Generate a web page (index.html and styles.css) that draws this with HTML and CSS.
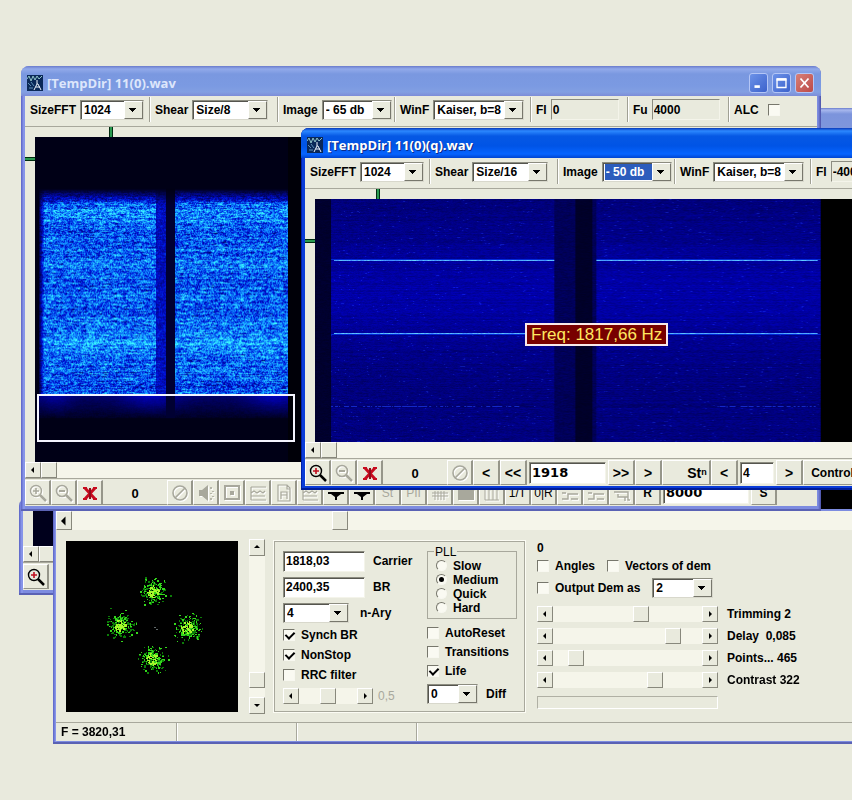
FILE: index.html
```html
<!DOCTYPE html>
<html lang="en">
<head>
<meta charset="utf-8">
<title>Signal analyzer</title>
<link rel="stylesheet" href="styles.css">
</head>
<body>
<svg class="defs" aria-hidden="true">
  <symbol id="app" viewBox="0 0 16 16"><rect width="16" height="16" fill="#0a2858"/><path d="M0 4l2-3 2 5 2-5 2 4 2-4 2 3 3-3" fill="none" stroke="#8fc4c8"/><path d="M1 8l3 3M4 7l3 4M2 13h4" stroke="#5e90b8" fill="none"/><path d="M10 5v4M7 15l3-6h1l3 6M9 12h4" stroke="#f0f6ff" fill="none"/></symbol>
  <symbol id="zoomin" viewBox="0 0 20 20"><path d="M12 12l6 6" stroke="currentColor" stroke-width="2.5"/><circle cx="8" cy="8" r="5.5" fill="none" stroke="currentColor" stroke-width="1.4"/><path class="plus" d="M5 8h6M8 5v6" stroke-width="1.6"/></symbol>
  <symbol id="zoomout" viewBox="0 0 20 20"><path d="M12 12l6 6" stroke="currentColor" stroke-width="2.5"/><circle cx="8" cy="8" r="5.5" fill="none" stroke="currentColor" stroke-width="1.6"/><path d="M5 8h6" stroke="currentColor" stroke-width="2"/></symbol>
  <symbol id="erase" viewBox="0 0 20 20"><path d="M5 5l10 11M15 5L5 16" stroke="#c80c20" stroke-width="3"/><path d="M3 5h4M13 5h4M3 16h4M13 16h4" stroke="#c80c20" stroke-width="2"/><path d="M10 5v11" stroke="#900c1c" stroke-width="2"/></symbol>
  <symbol id="none" viewBox="0 0 20 20"><circle cx="10" cy="10" r="7" fill="none" stroke="currentColor" stroke-width="1.6"/><path d="M5 15L15 5" stroke="currentColor" stroke-width="1.6"/></symbol>
  <symbol id="speaker" viewBox="0 0 20 20"><path d="M3 7h3l6-5v16l-6-5H3z" fill="currentColor"/><path d="M15 4v2M17 8v1M15 10v1M17 13v1M15 15v2" stroke="currentColor" stroke-width="1.6"/></symbol>
  <symbol id="target" viewBox="0 0 20 20"><rect x="3" y="3" width="14" height="13" fill="none" stroke="currentColor" stroke-width="2"/><rect x="8" y="8" width="4" height="4" fill="currentColor"/></symbol>
  <symbol id="wave" viewBox="0 0 20 20"><path d="M3 4h15M3 10l3-2 3 2 3-2 3 2 2-2M3 13h14M3 17h15M3 4v13" fill="none" stroke="currentColor" stroke-width="1.2"/></symbol>
  <symbol id="report" viewBox="0 0 20 20"><path d="M4 2h9l3 3v13H4zM13 2v4h3M7 16V9h6v7M7 12h6" fill="none" stroke="currentColor" stroke-width="1.2"/></symbol>
  <symbol id="drop" viewBox="0 0 20 20"><path d="M2 9h16v2h-3l-4 3v3H9v-3l-4-3H2z" fill="currentColor"/></symbol>
  <symbol id="gridi" viewBox="0 0 20 20"><path d="M2 10h16M2 13h16M5 8v9M8 8v9M11 8v9M14 8v9" stroke="currentColor"/></symbol>
  <symbol id="block" viewBox="0 0 20 20"><path d="M2 7h16v10H2z" fill="currentColor"/></symbol>
  <symbol id="bars" viewBox="0 0 20 20"><path d="M3 17V5M7 17V7M11 17V5M15 17V7M3 17h14" stroke="currentColor" fill="none"/></symbol>
  <symbol id="step" viewBox="0 0 20 20"><path d="M2 16h6v-5h10M2 10h4M11 16h7" stroke="currentColor" fill="none" stroke-width="1.4"/></symbol>
  <symbol id="link" viewBox="0 0 20 20"><path d="M2 9h14v5H6v-3M13 14v4M16 13v4h2" stroke="currentColor" fill="none" stroke-width="1.4"/></symbol>
  <symbol id="left" viewBox="0 0 8 8"><path d="M2 4l3-3v6z" fill="currentColor"/></symbol>
  <symbol id="right" viewBox="0 0 8 8"><path d="M6 4L3 1v6z" fill="currentColor"/></symbol>
  <symbol id="up" viewBox="0 0 8 8"><path d="M4 2L1 5h6z" fill="currentColor"/></symbol>
  <symbol id="down" viewBox="0 0 8 8"><path d="M4 6L1 3h6z" fill="currentColor"/></symbol>
</svg>

<main class="desktop">

  <section class="window win-back" aria-label="Background analyzer">
    <div class="view"><div class="black"></div></div>
    <div class="scroll"><button aria-label="Scroll left"><svg><use href="#left"/></svg></button><input type="range" value="0" aria-label="Position"></div>
    <div class="tools"><button class="tool" aria-label="Zoom in"><svg><use href="#zoomin"/></svg></button></div>
  </section>

  <section class="window win-demod" aria-label="Demodulator">
    <header class="title"></header>
    <div class="black fill"></div>
    <div class="scroll tall"><button aria-label="Scroll left"><svg><use href="#left"/></svg></button><input type="range" value="27" aria-label="Position"></div>
    <div class="panel">
      <canvas id="constellation" width="172" height="171"></canvas>
      <div class="scroll vertical"><button aria-label="Up"><svg><use href="#up"/></svg></button><input type="range" value="7" aria-label="Scale"><button aria-label="Down"><svg><use href="#down"/></svg></button></div>
      <div class="group">
        <div class="stack">
          <label class="row"><input class="field w-num" value="1818,03">Carrier</label>
          <label class="row"><input class="field w-num" value="2400,35">BR</label>
          <label class="row wide-gap"><span class="combo w-ary"><select><option>4</option></select></span>n-Ary</label>
          <div>
            <label class="check"><input type="checkbox" checked>Synch BR</label>
            <label class="check"><input type="checkbox" checked>NonStop</label>
            <label class="check"><input type="checkbox">RRC filter</label>
          </div>
          <div class="row dim"><div class="scroll bar"><button aria-label="Less"><svg><use href="#left"/></svg></button><input type="range" value="50" aria-label="Roll-off"><button aria-label="More"><svg><use href="#right"/></svg></button></div>0,5</div>
        </div>
        <div class="side">
          <fieldset>
            <legend>PLL</legend>
            <label class="radio"><input type="radio" name="pll">Slow</label>
            <label class="radio"><input type="radio" name="pll" checked>Medium</label>
            <label class="radio"><input type="radio" name="pll">Quick</label>
            <label class="radio"><input type="radio" name="pll">Hard</label>
          </fieldset>
          <div class="checks">
            <label class="check"><input type="checkbox">AutoReset</label>
            <label class="check"><input type="checkbox">Transitions</label>
            <label class="check"><input type="checkbox" checked>Life</label>
          </div>
          <label class="row"><span class="combo w-diff"><select><option>0</option></select></span>Diff</label>
        </div>
      </div>
      <div class="output">
        <div>0</div>
        <div class="line"><label class="check"><input type="checkbox">Angles</label><label class="check"><input type="checkbox">Vectors of dem</label></div>
        <div class="line"><label class="check"><input type="checkbox">Output Dem as</label><span class="combo w-dem"><select aria-label="Output format"><option>2</option></select></span></div>
        <div class="sliders">
          <div class="scroll"><button aria-label="Less"><svg><use href="#left"/></svg></button><input id="trim" type="range" value="60"><button aria-label="More"><svg><use href="#right"/></svg></button></div><label for="trim">Trimming 2</label>
          <div class="scroll"><button aria-label="Less"><svg><use href="#left"/></svg></button><input id="delay" type="range" value="84"><button aria-label="More"><svg><use href="#right"/></svg></button></div><label for="delay">Delay&nbsp; 0,085</label>
          <div class="scroll"><button aria-label="Less"><svg><use href="#left"/></svg></button><input id="points" type="range" value="11"><button aria-label="More"><svg><use href="#right"/></svg></button></div><label for="points">Points... 465</label>
          <div class="scroll"><button aria-label="Less"><svg><use href="#left"/></svg></button><input id="contrast" type="range" value="71"><button aria-label="More"><svg><use href="#right"/></svg></button></div><label for="contrast">Contrast 322</label>
          <div class="progress"></div>
        </div>
      </div>
    </div>
    <footer class="status"><span>F = 3820,31</span><span></span><span></span><span></span></footer>
  </section>

  <section class="window win-source" aria-label="11(0).wav">
    <header class="title"><svg><use href="#app"/></svg><h2>[TempDir] 11(0).wav</h2>
      <button class="cap" aria-label="Minimize"><svg viewBox="0 0 19 20"><path d="M5 14h6" stroke="#fff" stroke-width="3"/></svg></button>
      <button class="cap" aria-label="Maximize"><svg viewBox="0 0 19 20"><path d="M4 6h11M4.500 5v10h10V5" stroke="#fff" stroke-width="1.500" fill="none"/><path d="M4 6h11" stroke="#fff" stroke-width="3"/></svg></button>
      <button class="cap close" aria-label="Close"><svg viewBox="0 0 19 20"><path d="M5 5l9 10M14 5L5 15" stroke="#fff" stroke-width="2"/></svg></button>
    </header>
    <div class="options">
      <label>SizeFFT<span class="combo w-fft"><select><option>1024</option></select></span></label>
      <label>Shear<span class="combo w-shear"><select><option>Size/8</option></select></span></label>
      <label>Image<span class="combo w-image"><select><option>- 65 db</option></select></span></label>
      <label>WinF<span class="combo w-winf"><select><option>Kaiser, b=8</option></select></span></label>
      <label>Fl<input class="field flat" value="0"></label>
      <label>Fu<input class="field flat" value="4000"></label>
      <label>ALC<input type="checkbox"></label>
    </div>
    <div class="view">
      <i class="tick-x"></i><i class="tick-y"></i>
      <canvas id="spectrum-source" width="782" height="326"></canvas>
      <div class="selection"></div>
    </div>
    <div class="scroll"><button aria-label="Scroll left"><svg><use href="#left"/></svg></button><input type="range" value="0" aria-label="Position"></div>
    <div class="tools">
      <button class="tool" disabled aria-label="Zoom in"><svg><use href="#zoomin"/></svg></button>
      <button class="tool" disabled aria-label="Zoom out"><svg><use href="#zoomout"/></svg></button>
      <button class="tool" aria-label="Clear"><svg><use href="#erase"/></svg></button>
      <output>0</output>
      <button class="tool" disabled aria-label="Stop"><svg><use href="#none"/></svg></button>
      <button class="tool" disabled aria-label="Play"><svg><use href="#speaker"/></svg></button>
      <button class="tool" disabled aria-label="Frame"><svg><use href="#target"/></svg></button>
      <button class="tool" disabled aria-label="Waveform"><svg><use href="#wave"/></svg></button>
      <button class="tool" disabled aria-label="Report"><svg><use href="#report"/></svg></button>
      <button class="tool" disabled aria-label="Levels"><svg><use href="#wave"/></svg></button>
      <button class="tool" aria-label="Marker one"><svg><use href="#drop"/></svg></button>
      <button class="tool" aria-label="Marker two"><svg><use href="#drop"/></svg></button>
      <button class="tool thin" disabled>St</button>
      <button class="tool thin" disabled>PII</button>
      <button class="tool" disabled aria-label="Grid"><svg><use href="#gridi"/></svg></button>
      <button class="tool" disabled aria-label="Fill"><svg><use href="#block"/></svg></button>
      <button class="tool" disabled aria-label="Bars"><svg><use href="#bars"/></svg></button>
      <button class="tool thin">1/T</button>
      <button class="tool thin">0|R</button>
      <button class="tool" disabled aria-label="Steps"><svg><use href="#step"/></svg></button>
      <button class="tool" disabled aria-label="Edge"><svg><use href="#step"/></svg></button>
      <button class="tool" disabled aria-label="Link"><svg><use href="#link"/></svg></button>
      <button class="tool">R</button>
      <input class="field big w-rate" value="8000" aria-label="Sample rate">
      <button class="tool">S</button>
    </div>
  </section>

  <section class="window active win-result" aria-label="11(0)(q).wav">
    <header class="title"><svg><use href="#app"/></svg><h2>[TempDir] 11(0)(q).wav</h2></header>
    <div class="options">
      <label>SizeFFT<span class="combo w-fft"><select><option>1024</option></select></span></label>
      <label>Shear<span class="combo w-shear"><select><option>Size/16</option></select></span></label>
      <label>Image<span class="combo w-image chosen"><select><option>- 50 db</option></select></span></label>
      <label>WinF<span class="combo w-winf"><select><option>Kaiser, b=8</option></select></span></label>
      <label>Fl<input class="field flat" value="-4000"></label>
    </div>
    <div class="view">
      <i class="tick-x"></i><i class="tick-y"></i>
      <canvas id="spectrum-result" width="782" height="243"></canvas>
      <div class="hint">Freq: 1817,66 Hz</div>
    </div>
    <div class="scroll"><button aria-label="Scroll left"><svg><use href="#left"/></svg></button><input type="range" value="0" aria-label="Position"></div>
    <div class="tools">
      <button class="tool" aria-label="Zoom in"><svg><use href="#zoomin"/></svg></button>
      <button class="tool" disabled aria-label="Zoom out"><svg><use href="#zoomout"/></svg></button>
      <button class="tool" aria-label="Clear"><svg><use href="#erase"/></svg></button>
      <output>0</output>
      <button class="tool" disabled aria-label="Stop"><svg><use href="#none"/></svg></button>
      <button class="tool arrow">&lt;</button>
      <button class="tool arrow">&lt;&lt;</button>
      <input class="field big w-freq" value="1918" aria-label="Frequency">
      <button class="tool arrow">&gt;&gt;</button>
      <button class="tool arrow">&gt;</button>
      <button class="tool step">St<sup>n</sup></button>
      <button class="tool arrow">&lt;</button>
      <input class="field w-step" value="4" aria-label="Step">
      <button class="tool arrow">&gt;</button>
      <button class="tool control">Control</button>
    </div>
  </section>
</main>
<script src="script.js"></script>
</body>
</html>
```
FILE: styles.css
```css
* { box-sizing: border-box; }

:root {
  --face: #e9eadd;
  --light: #fcfcf4;
  --shade: #8c8c80;
  --track: #f5f5ea;
}

body {
  margin: 0;
  background: var(--face);
  color: #000;
  font: bold 12px/14px "Liberation Sans", Arial, sans-serif;
}

button, input, select, output { font: inherit; color: inherit; }
button { padding: 0; border: 0; background: var(--face); }
.defs { position: absolute; width: 0; height: 0; }

.desktop {
  position: relative;
  min-height: 100vh;
  overflow: hidden;
}

/* Windows */
.window {
  position: absolute;
  display: flex;
  flex-direction: column;
  padding: 0 4px 5px;
  border-radius: 8px 8px 0 0;
  background: linear-gradient(90deg, #5a63c4, #8f9df0 3px, #7d8ce0 4px, #7d8ce0 calc(100% - 3px), #4a50a8);
  box-shadow: inset 0 -2px #5a62b4;
}
.window > * { background-color: var(--face); }

.win-back { left: 19px; top: 498px; width: 600px; height: 97px; }
.win-demod { left: 53px; top: 108px; width: 1000px; height: 636px; padding: 0 3px 3px; }
.win-source { left: 21px; top: 66px; width: 800px; height: 445px; }
.win-result {
  left: 301px; top: 128px; width: 801px; height: 362px;
  padding-bottom: 4px;
  background: #0a3cd8;
  box-shadow: inset 0 -2px #001c98, inset 1px 0 #0020a8;
}

.title {
  display: flex;
  align-items: center;
  gap: 4px;
  flex: none;
  height: 30px;
  margin: 0 -4px;
  padding: 4px 7px 0 6px;
  border-radius: 8px 8px 0 0;
  background: linear-gradient(#6a7ccc, #92aaea 3px, #7a98e0 8px, #7b9ae2 20px, #829fe2 26px, #7c8cd8);
}
.active .title { background: linear-gradient(#0838b8, #2c88ff 3px, #0658e4 8px, #0054e6 18px, #0664ff 26px, #0044d0); }
.win-demod .title { background: linear-gradient(#6a7ccc, #a8b8ee 2px, #7c94dc 6px, #7f97dc); }
.title > svg { width: 16px; height: 16px; }
.title h2 {
  flex: 1;
  margin: 0;
  color: #dde6fb;
  font: bold 13px/16px "Open Sans", sans-serif;
}
.active .title h2 { color: #fff; text-shadow: 1px 1px #0a2c8c; }

.cap {
  width: 19px;
  height: 20px;
  border: 1px solid #b4c6f6;
  border-radius: 3px;
  background: linear-gradient(135deg, #6c92e8, #3c62cc);
}
.cap.close { background: linear-gradient(135deg, #d88078, #bc4a48); }
.cap svg { display: block; width: 100%; height: 100%; }

/* Option bar */
.options {
  display: grid;
  grid-template-columns: 124px 128px 117px 136px 97px 101px 1fr;
  flex: none;
  height: 31px;
  padding: 1px 0 4px;
  border-bottom: 1px solid #a8a89c;
}
.options label {
  display: flex;
  align-items: center;
  gap: 4px;
  min-width: 0;
  padding-left: 5px;
  border-left: 1px solid #a0a094;
  box-shadow: inset 1px 0 #fff;
}
.options label:first-child { border: 0; box-shadow: none; }
.options label:last-child input[type="checkbox"] { margin-left: 5px; }

.combo {
  display: flex;
  align-items: center;
  height: 20px;
  border: 1px solid var(--shade);
  border-right-color: #d8d8cc;
  border-bottom-color: #d8d8cc;
  box-shadow: inset 1px 1px #55554e;
  background: #fff;
}
.combo select {
  flex: 1;
  min-width: 0;
  height: 16px;
  margin-left: 1px;
  margin-right: -16px;
  padding: 0 0 0 2px;
  border: 0;
  background: none;
  appearance: none;
}
.combo::after {
  content: "";
  width: 17px;
  height: 16px;
  pointer-events: none;
  border: 1px solid #fff;
  border-right-color: #77776c;
  border-bottom-color: #77776c;
  background:
    linear-gradient(#000, #000) 4px 6px / 7px 1px no-repeat,
    linear-gradient(#000, #000) 5px 7px / 5px 1px no-repeat,
    linear-gradient(#000, #000) 6px 8px / 3px 1px no-repeat,
    linear-gradient(#000, #000) 7px 9px / 1px 1px no-repeat,
    var(--face);
}
.chosen select {
  background: linear-gradient(#2c5cbc, #2c5cbc) 1px 0 / 48px 100% no-repeat;
  color: #fff;
}
.w-fft { width: 64px; }
.w-shear { width: 76px; }
.w-image { width: 70px; }
.w-winf { width: 91px; }
.w-ary { width: 66px; }
.w-diff { width: 51px; }
.w-dem { width: 61px; }

.field {
  height: 21px;
  padding: 0 2px;
  border: 1px solid var(--shade);
  border-right-color: #f4f4ea;
  border-bottom-color: #f4f4ea;
  box-shadow: inset 1px 1px #55554e;
  background: #fff;
}
.field.flat { width: 68px; background: var(--face); box-shadow: none; padding: 0 1px; }
.field.big { font-family: "DejaVu Sans", sans-serif; font-size: 13px; }
.w-num { width: 82px; }
.w-rate { width: 86px; margin: 0 2px; }
.w-freq { width: 77px; margin: 0 2px; }
.w-step { width: 34px; margin: 0 2px; }

/* Spectrum view */
.view {
  position: relative;
  flex: 1;
  min-height: 0;
  padding: 10px 0 0 10px;
  overflow: hidden;
}
.view canvas { display: block; width: 100%; height: 100%; }
.black { height: 100%; background: #00001c; }
.window > .fill { flex: 1; height: auto; background: #000; }

.tick-x, .tick-y { position: absolute; background: #2a9a50; border: 0 solid #002c10; }
.tick-x { top: 0; width: 4px; height: 10px; border-width: 0 1px; }
.tick-y { left: 0; width: 10px; height: 4px; border-width: 1px 0; }
.win-source .tick-x { left: 84px; }
.win-source .tick-y { top: 30px; }
.win-result .tick-x { left: 71px; }
.win-result .tick-y { top: 50px; }

.selection {
  position: absolute;
  left: 12px;
  top: 267px;
  width: 258px;
  height: 48px;
  border: 2px solid #f4f4ff;
}
.hint {
  position: absolute;
  left: 220px;
  top: 134px;
  padding: 0 4px;
  border: 2px solid #f8e8e8;
  background: #780000;
  color: #ffe860;
  font-size: 17px;
  font-weight: normal;
  line-height: 19px;
  white-space: nowrap;
}

/* Scroll bars */
.scroll { display: flex; flex: none; height: 16px; background: var(--track); }
.scroll button {
  display: grid;
  place-items: center;
  flex: none;
  width: 16px;
  border: 1px solid #fff;
  border-right-color: #88887c;
  border-bottom-color: #88887c;
}
.scroll svg { width: 8px; height: 8px; }
.scroll input { flex: 1; min-width: 0; margin: 0; appearance: none; background: none; }
.scroll input::-webkit-slider-thumb {
  appearance: none;
  width: 16px;
  height: 16px;
  border: 1px solid #fff;
  border-right-color: #88887c;
  border-bottom-color: #88887c;
  background: var(--face);
}
.scroll.tall { height: 19px; margin-top: 2px; }
.scroll.tall input::-webkit-slider-thumb { height: 19px; }
.scroll.tall svg { width: 12px; height: 12px; }
.scroll.vertical { flex-direction: column; width: 16px; height: 175px; }
.scroll.vertical button { height: 17px; }
.scroll.vertical input { writing-mode: vertical-lr; direction: rtl; width: 16px; }

/* Bottom tool bar */
.tools {
  display: flex;
  flex: none;
  align-items: stretch;
  height: 28px;
  padding: 1px 0;
  border-top: 1px solid #a8a89c;
}
.tool {
  --plus: #c01020;
  display: flex;
  align-items: center;
  justify-content: center;
  flex: none;
  width: 26px;
  border: 1px solid #fff;
  border-right: 2px solid #96968a;
  border-bottom-color: #96968a;
}
.tool svg { width: 20px; height: 20px; }
.plus { stroke: var(--plus); }
.tool:disabled { --plus: #a8a89c; color: #a8a89c; }
.tool:disabled svg { filter: drop-shadow(1px 1px #fff); }
.tools output {
  width: 64px;
  border-bottom: 1px solid #96968a;
  font-size: 13px;
  line-height: 27px;
  text-align: center;
}
.tools .field { height: 22px; align-self: center; }
.thin { font-weight: normal; }
.arrow { width: 27px; font-size: 14px; }
.step { width: 49px; padding-left: 22px; font-size: 14px; }
.step sup { font-size: 9px; line-height: 9px; }
.control { width: 60px; }

/* Demodulator */
.panel {
  display: flex;
  align-items: center;
  flex: none;
  height: 192px;
  padding-left: 10px;
}
.panel > .vertical { margin: 0 9px 0 11px; }
.group {
  display: flex;
  flex: none;
  justify-content: space-between;
  width: 251px;
  height: 171px;
  padding: 0 7px 0 8px;
  border: 1px solid #a8a89c;
  outline: 1px solid #fcfcf4;
}
.stack { display: flex; flex-direction: column; gap: 5px; padding-top: 9px; }
.stack > div:nth-child(4) { margin-top: -4px; }
.stack > div:last-child { margin-top: -2px; }
.row { display: flex; align-items: center; gap: 8px; height: 21px; }
.wide-gap { gap: 11px; }
.row.dim { height: 16px; gap: 5px; color: #a8a89c; font-weight: normal; }
.row.dim svg { color: #000; }
.bar { width: 90px; }

.check { display: flex; align-items: center; gap: 6px; height: 20px; }
.side .check { height: 19px; }
input[type="checkbox"], input[type="radio"] {
  appearance: none;
  flex: none;
  width: 12px;
  height: 12px;
  margin: 0;
  border: 1px solid #77776c;
  border-right-color: #f8f8f0;
  border-bottom-color: #f8f8f0;
  background: #fafaf2;
}
input[type="checkbox"]:checked::after {
  content: "";
  display: block;
  width: 4px;
  height: 7px;
  margin: 0 0 0 3px;
  border: solid #000;
  border-width: 0 2px 2px 0;
  transform: rotate(45deg);
}
input[type="radio"] { width: 11px; height: 11px; border-radius: 50%; }
input[type="radio"]:checked::after {
  content: "";
  display: block;
  width: 5px;
  height: 5px;
  margin: 2px;
  border-radius: 50%;
  background: #000;
}

.side { width: 90px; padding-top: 3px; }
fieldset {
  height: 74px;
  margin: 0;
  padding: 0 0 0 8px;
  border: 1px solid #a8a89c;
}
legend { padding: 0 1px; margin-left: -2px; font-weight: normal; }
.radio { display: flex; align-items: center; gap: 6px; height: 14px; }
.checks { margin: 5px 0 3px; }

.output { flex: 1; align-self: flex-start; padding: 11px 0 0 12px; }
.line { display: flex; align-items: center; gap: 12px; height: 22px; }
.sliders {
  display: grid;
  grid-template-columns: 181px 1fr;
  grid-auto-rows: 16px;
  align-items: center;
  gap: 6px 9px;
  margin-top: 7px;
}
.progress { height: 13px; border: 1px solid #b0b0a4; border-right-color: #fff; border-bottom-color: #fff; }

.status {
  display: grid;
  grid-template-columns: 121px 118px 118px 1fr;
  gap: 2px;
  flex: none;
  height: 19px;
  border-top: 1px solid #a8a89c;
}
.status span { padding: 2px 5px; border-right: 1px solid #a8a89c; box-shadow: 1px 0 #fff; }
```
FILE: script.js
```js
// Seeded generator, so that every load draws the same signal.
function generator(seed) {
  return function () {
    seed = (seed * 1664525 + 1013904223) >>> 0;
    return seed / 4294967296;
  };
}

function ramp(v) {
  v = Math.max(0, Math.min(1, v));
  if (v < 0.4) return [0, v * 30, 30 + v * 450];
  const t = (v - 0.4) / 0.6;
  return [t * t * 60, 12 + t * 235, 210 + Math.min(1, t * 2) * 45];
}

function paint(id, seed, level) {
  const canvas = document.getElementById(id);
  const ctx = canvas.getContext("2d");
  const image = ctx.createImageData(canvas.width, canvas.height);
  const random = generator(seed);
  for (let y = 0; y < canvas.height; y++) {
    const row = random();
    let smooth = 0.5;
    for (let x = 0; x < canvas.width; x++) {
      smooth = smooth * 0.5 + random() * 0.5;
      const c = level(x, y, row, smooth);
      const i = (y * canvas.width + x) * 4;
      image.data[i] = c[0];
      image.data[i + 1] = c[1];
      image.data[i + 2] = c[2];
      image.data[i + 3] = 255;
    }
  }
  ctx.putImageData(image, 0, 0);
}

const bump = (y, centre, width) => Math.exp(-Math.pow((y - centre) / width, 2));

paint("spectrum-source", 7, (x, y, row, n) => {
  if (x > 252) return [0, 0, 8];
  if (y < 52 || y > 281 || x < 4) return [0, 0, 22];
  const edge = Math.min(1, (y - 52) / 16);
  if (x > 130 && x < 140) return [0, 0, 30 * edge + 20];
  const fade = Math.min(1, (x - 3) / 6);
  if (y > 258) {
    const tail = Math.max(0, (281 - y) / 23);
    const right = Math.max(bump(x, 115, 28), bump(x, 240, 28), bump(x, 20, 16) * 0.7);
    return [0, 0, 22 + tail * (70 + right * 90) + n * 30];
  }
  if (x > 120 && x <= 130) return ramp((0.16 + n * 0.4) * edge);
  const band = bump(y, 78, 12) * 0.13 + bump(y, 130, 14) * 0.08 + bump(y, 162, 10) * 0.03 + bump(y, 205, 13) * 0.17;
  return ramp((0.58 + band + (row - 0.5) * 0.2 + (n - 0.5) * 0.95) * edge * fade);
});

paint("spectrum-result", 21, (x, y, row, n) => {
  if (x > 504) return [0, 0, 0];
  if (x < 16) return [0, 0, 36 + n * 20];
  const gap = x > 238 && x < 281;
  if (x > 259 && x < 277) return [0, 0, 34 + n * 14];
  if (gap) return [0, 0, 68 + n * 40];
  if ((y === 61 || y === 134) && x > 18 && x < 502) return [50 + n * 60, 110 + n * 120, 255];
  if (y === 60 || y === 135) return [0, 40, 215];
  if (y === 207 && (x > 400 || x < 220) && n > 0.45) return [20, 40, 200];
  const middle = bump(y, 95, 55) * 42;
  const speck = n > 0.84 ? 25 : 0;
  return [speck / 2, speck, 96 + middle + n * 56 + (row - 0.5) * 18 + speck];
});

(function () {
  const ctx = document.getElementById("constellation").getContext("2d");
  const random = generator(5);
  ctx.fillStyle = "#000";
  ctx.fillRect(0, 0, 172, 171);
  const gauss = () => random() + random() + random() + random() - 2;
  for (const [cx, cy] of [[87, 50], [54, 84], [121, 86], [86, 118]]) {
    for (let i = 0; i < 230; i++) {
      const dx = gauss() * 10, dy = gauss() * 10;
      const near = Math.hypot(dx, dy) < 6;
      ctx.fillStyle = near && random() > 0.3 ? "#a8f82c" : random() > 0.45 ? "#34d81c" : "#0c7c08";
      ctx.fillRect(Math.round(cx + dx), Math.round(cy + dy), random() > 0.5 ? 2 : 1, random() > 0.6 ? 2 : 1);
    }
  }
  ctx.fillStyle = "#606868";
  ctx.fillRect(88, 86, 2, 1);
  ctx.fillRect(90, 88, 2, 1);
})();
```
